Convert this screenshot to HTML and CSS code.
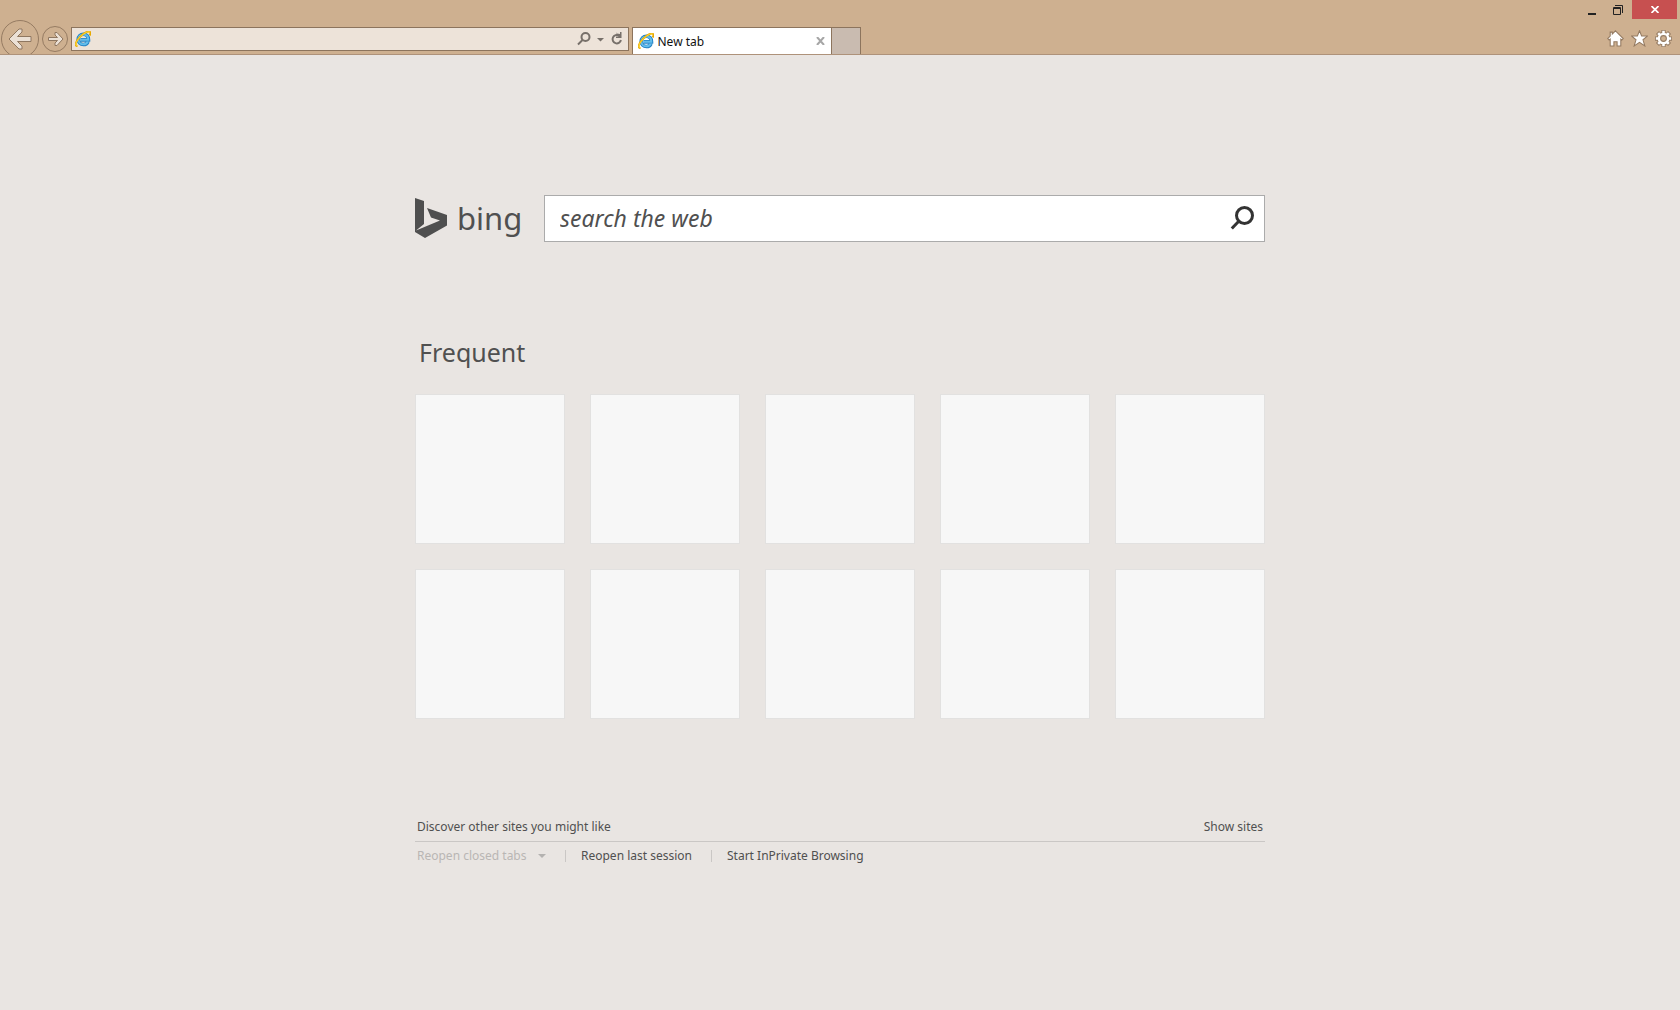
FILE: index.html
```html
<!DOCTYPE html>
<html lang="en">
<head>
<meta charset="utf-8">
<title>New tab</title>
<link rel="stylesheet" href="styles.css">
</head>
<body>
<svg class="defs" aria-hidden="true">
  <symbol id="ie" viewBox="0 0 16 16">
    <path d="M13 10.7C12.2 12.5 10.500 13.500 8.400 13.500C5.400 13.500 3.200 11.400 3.200 8.400C3.200 5.400 5.400 3.200 8.400 3.200C11.500 3.200 13.600 5.400 13.500 8.900H5.500" fill="none" stroke="#2382c4" stroke-width="3.600"/>
    <path d="M12.800 10.500C12 12.300 10.400 13.300 8.400 13.300C5.500 13.300 3.400 11.300 3.400 8.400C3.400 5.500 5.500 3.400 8.400 3.400C11.300 3.400 13.300 5.500 13.300 8.700H5.500" fill="none" stroke="#62bdeb" stroke-width="2"/>
    <path d="M2.500 15.200C-.8 15 .7 10.200 5 5.800C9.300 1.500 14.200-.6 15.200 1.300C15.600 2.200 15.300 3.400 14.700 4.500" fill="none" stroke="#e8a900" stroke-width="1.900"/>
    <path d="M2.500 15.100C-.5 14.800 1 10.200 5.200 6C9.400 1.800 14 -.2 15 1.400" fill="none" stroke="#ffdc3c" stroke-width="1"/>
  </symbol>
</svg>
<header class="chrome">
  <nav class="nav" aria-label="Browser navigation">
    <button class="round back" aria-label="Back"><svg width="38" height="38" viewBox="0 0 38 38"><circle cx="19" cy="19" r="18.500" fill="none" stroke="#957b62"/><path d="M8 19 18 9h3v3l-4.500 4.500H30v5H16.500L21 26v3h-3Z" fill="#ebe0d5" stroke="#8f7760" stroke-width="1"/></svg></button>
    <button class="round" aria-label="Forward"><svg width="26" height="26" viewBox="0 0 26 26"><circle cx="13" cy="13" r="12.500" fill="none" stroke="#957b62"/><path d="M21 13 15 6.500h-2v2.500l2.500 2.500H6.500v3h9L13 17v2.500h2Z" fill="#ebe0d5" stroke="#8f7760"/></svg></button>
    <div class="address">
      <svg width="16" height="16"><use href="#ie"/></svg>
      <input type="text" aria-label="Address">
      <button aria-label="Search"><svg width="14" height="14" viewBox="0 0 14 14" fill="none" stroke="#77706a" stroke-width="2"><circle cx="8.500" cy="5" r="4"/><path d="m5.500 8-4.500 4.500"/></svg></button>
      <button aria-label="Show address history"><svg width="8" height="14" viewBox="0 0 8 14"><path d="M0 6h7L3.500 9.500Z" fill="#77706a"/></svg></button>
      <button aria-label="Refresh"><svg width="12" height="14" viewBox="0 0 12 14"><path d="M8 3.600A4.200 4.200 0 1 0 9.900 8" fill="none" stroke="#77706a" stroke-width="2"/><path d="M6 0v1.600l3 .4V0h1.500v6H5V4.500h2.500L5.500 2Z" fill="#77706a"/></svg></button>
    </div>
    <div class="tab">
      <svg width="16" height="16"><use href="#ie"/></svg>
      <span>New tab</span>
      <button aria-label="Close tab"><svg width="9" height="8" viewBox="0 0 9 8"><path d="m1 0 7 8M8 0 1 8" stroke="#a6a6a6" stroke-width="2"/></svg></button>
    </div>
    <button class="newtab" aria-label="New tab"></button>
  </nav>
  <div class="side">
    <div class="window">
      <button aria-label="Minimize"><svg width="10" height="10"><path d="M1 8h8v2H1Z" fill="#222"/></svg></button>
      <button aria-label="Restore"><svg width="10" height="10" viewBox="0 0 10 10"><path d="M2 .5h7.500V8M.5 2.500h7v7h-7ZM.5 3.500h7" fill="none" stroke="#222"/></svg></button>
      <button class="close" aria-label="Close"><svg width="8" height="7" viewBox="0 0 8 7"><path d="m.5 0 7 7m0-7-7 7" stroke="#fff" stroke-width="1.700"/></svg></button>
    </div>
    <div class="tools">
      <button aria-label="Home"><svg width="17" height="17" viewBox="0 0 16 16"><path d="m8 .8 7.300 7.200-1.300 1.400-1-.8V15H9.500v-4h-3v4H3V8.600l-1 .8L.7 8 3 5.700V2h2v1.700Z" fill="#fff" stroke="#947a61"/></svg></button>
      <button aria-label="Favorites"><svg width="17" height="17" viewBox="0 0 16 16"><path d="m8 .7 2 4.900h5.600l-4.300 3.600 1.700 5.800L8 11.600 3 15l1.700-5.800L.4 5.600H6Z" fill="#fff" stroke="#947a61"/></svg></button>
      <button aria-label="Tools"><svg width="17" height="17" viewBox="0 0 16 16"><path d="M8 0v16M0 8h16M2.300 2.300l11.400 11.400M13.700 2.300 2.300 13.700" stroke="#947a61" stroke-width="4"/><circle cx="8" cy="8" r="6.200" fill="#947a61"/><path d="M8 .8v14.400M.8 8h14.400M3 3l10 10M13 3 3 13" stroke="#fff" stroke-width="2.400"/><circle cx="8" cy="8" r="5.500" fill="#fff"/><circle cx="8" cy="8" r="2.700" fill="#ceb090" stroke="#947a61"/></svg></button>
    </div>
  </div>
</header>
<main class="page">
  <form class="search">
    <a class="logo" href="#"><svg width="33" height="40" viewBox="0 0 33 40"><path d="M0 0 9 3v23L1 32.500 25 22.500 16 19.500 12 10l20 7v10.500L10 40 0 34Z" fill="#4f4f4f"/></svg><span>bing</span></a>
    <div class="box">
      <input type="text" placeholder="search the web" aria-label="Search the web">
      <button aria-label="Search"><svg width="24" height="24" viewBox="0 0 24 24" fill="none" stroke="#333" stroke-width="3"><circle cx="14.500" cy="9.500" r="8"/><path d="m9 15-7.200 7.500"/></svg></button>
    </div>
  </form>
  <h1>Frequent</h1>
  <div class="tiles">
    <div></div><div></div><div></div><div></div><div></div>
    <div></div><div></div><div></div><div></div><div></div>
  </div>
  <footer>
    <div class="discover"><span>Discover other sites you might like</span><a href="#">Show sites</a></div>
    <div class="session">
      <button disabled>Reopen closed tabs<svg width="8" height="4" viewBox="0 0 8 4"><path d="M0 0h8L4 4Z" fill="#b4b2b0"/></svg></button>
      <a href="#">Reopen last session</a>
      <a href="#">Start InPrivate Browsing</a>
    </div>
  </footer>
</main>
</body>
</html>
```
FILE: styles.css
```css
* { box-sizing: border-box; }
body {
  margin: 0;
  min-height: 100vh;
  background: #e9e5e2;
  color: #505050;
  font: 12px/16px "Noto Sans", "Open Sans", sans-serif;
}
button, input { margin: 0; padding: 0; border: 0; background: none; font: inherit; color: inherit; }
a { color: inherit; text-decoration: none; }
svg { display: block; flex: none; }
.defs { position: absolute; width: 0; height: 0; }

.chrome {
  display: flex;
  justify-content: space-between;
  height: 55px;
  overflow: hidden;
  background: #ceb090;
  border-bottom: 1px solid #ae927a;
}
.nav { display: flex; flex: 1; align-items: flex-start; padding: 20px 0 0 1px; }
.round { margin: 6px 3px 0; }
.round.back { margin: 0; }
.address {
  display: flex;
  align-items: center;
  gap: 6px;
  width: calc(50% - 232px);
  height: 24px;
  margin-top: 7px;
  padding: 0 5px 0 3px;
  border: 1px solid #8c745d;
  background: #ede3d9;
}
.address input { flex: 1; min-width: 0; height: 20px; outline: 0; }
.tab {
  display: flex;
  align-items: center;
  gap: 4px;
  width: 200px;
  height: 27px;
  margin: 7px 0 0 3px;
  padding: 0 6px 0 5px;
  border: 1px solid #8c745d;
  border-bottom: 0;
  background: #fff;
  color: #111;
}
.tab span { flex: 1; padding-top: 2px; }
.newtab { width: 29px; height: 27px; margin-top: 7px; background: #c9bbb0; border: 1px solid #8c745d; border-width: 1px 1px 0 0; }

.side { display: flex; flex-direction: column; gap: 11px; padding-right: 3px; }
.window { display: flex; height: 19px; }
.window button { display: flex; align-items: center; justify-content: center; width: 26px; padding-right: 2px; }
.window .close { width: 45px; padding: 0; background: #c75050; }
.tools { display: flex; justify-content: flex-end; gap: 7px; padding-right: 5px; }

.page { width: 850px; max-width: 100%; margin: 0 auto; padding-top: 140px; }
.search { display: flex; gap: 24px; }
.logo { display: flex; gap: 9px; width: 105px; padding-top: 3px; }
.logo span { font-size: 31px; line-height: 40px; }
.box { display: flex; align-items: center; flex: 1; height: 47px; padding: 0 10px 2px 15px; border: 1px solid #ababab; background: #fff; }
.box input { flex: 1; min-width: 0; height: 43px; font-size: 23px; font-style: italic; outline: 0; }
.box input::placeholder { color: #505050; opacity: 1; }
h1 { margin: 93px 0 25px 4px; font-size: 25px; font-weight: 400; line-height: 34px; }
.tiles { display: grid; grid-template-columns: repeat(auto-fill, 150px); gap: 25px; }
.tiles div { height: 150px; background: #f7f7f7; border: 1px solid #e2e1e0; }
footer { padding-top: 100px; }
.discover { display: flex; justify-content: space-between; padding: 0 2px 6px; border-bottom: 1px solid #cac7c5; }
.session { display: flex; align-items: center; padding: 6px 2px; }
.session button { display: flex; align-items: center; justify-content: space-between; width: 129px; color: #b9b6b4; }
.session a { display: flex; align-items: center; }
.session a::before { content: ""; width: 1px; height: 12px; margin: 0 15px 0 19px; background: #cac7c5; }
```
